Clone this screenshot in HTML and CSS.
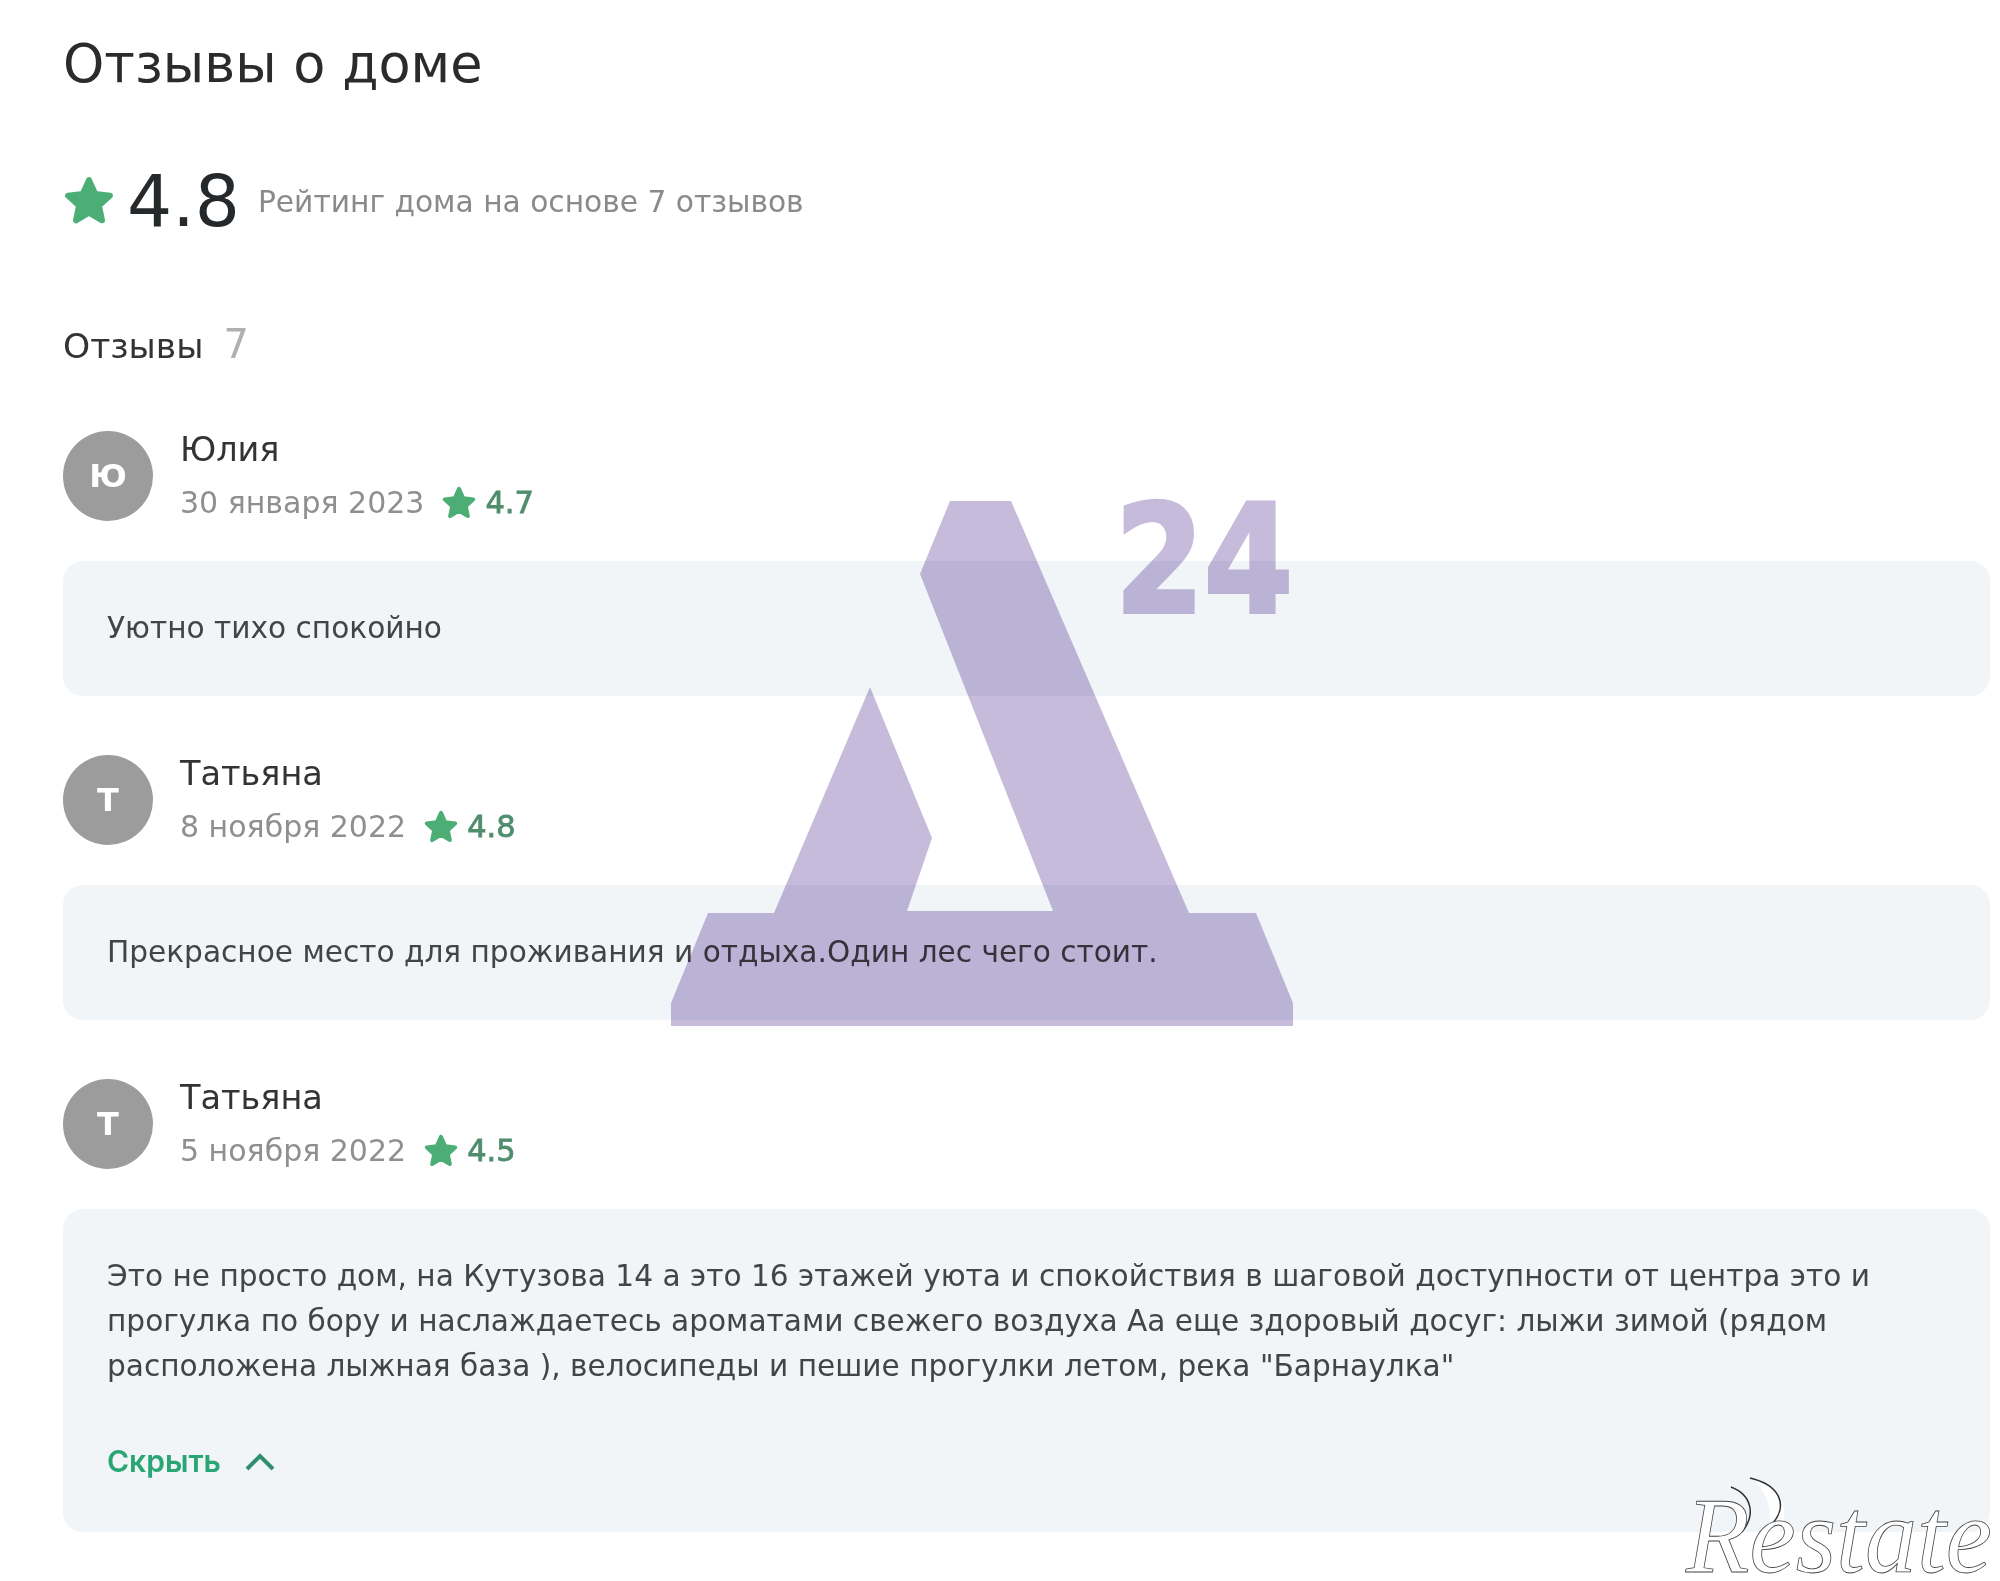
FILE: index.html
```html
<!DOCTYPE html>
<html>
<head>
    <meta charset="utf-8">
    <link rel="stylesheet" href="styles.css">
</head>
<body>
    <div class="page">
        <h1 class="title">Отзывы о доме</h1>

        <div class="summary">
            <svg class="star star-big" viewBox="0 0 24 24"><path d="M12 3l2.700 6 6.300.7-4.700 4.300 1.300 6.300L12 17l-5.600 3.300L7.700 14 3 9.700 9.300 9z"/></svg>
            <span class="summary-num">4.8</span>
            <span class="summary-text">Рейтинг дома на основе 7 отзывов</span>
        </div>

        <div class="count"><span class="count-label">Отзывы</span><span class="count-num">7</span></div>

        <!-- Review 1 -->
        <div class="review">
            <div class="head">
                <div class="avatar">Ю</div>
                <div class="who">
                    <div class="name">Юлия</div>
                    <div class="meta">
                        <span class="date">30 января 2023</span>
                        <svg class="star star-small" viewBox="0 0 24 24"><path d="M12 3l2.700 6 6.300.7-4.700 4.300 1.300 6.300L12 17l-5.600 3.300L7.700 14 3 9.700 9.300 9z"/></svg>
                        <span class="mark">4.7</span>
                    </div>
                </div>
            </div>
            <div class="panel">Уютно тихо спокойно</div>
        </div>

        <!-- Review 2 -->
        <div class="review">
            <div class="head">
                <div class="avatar">Т</div>
                <div class="who">
                    <div class="name">Татьяна</div>
                    <div class="meta">
                        <span class="date">8 ноября 2022</span>
                        <svg class="star star-small" viewBox="0 0 24 24"><path d="M12 3l2.700 6 6.300.7-4.700 4.300 1.300 6.300L12 17l-5.600 3.300L7.700 14 3 9.700 9.300 9z"/></svg>
                        <span class="mark">4.8</span>
                    </div>
                </div>
            </div>
            <div class="panel">Прекрасное место для проживания и отдыха.Один лес чего стоит.</div>
        </div>

        <!-- Review 3 -->
        <div class="review">
            <div class="head">
                <div class="avatar">Т</div>
                <div class="who">
                    <div class="name">Татьяна</div>
                    <div class="meta">
                        <span class="date">5 ноября 2022</span>
                        <svg class="star star-small" viewBox="0 0 24 24"><path d="M12 3l2.700 6 6.300.7-4.700 4.300 1.300 6.300L12 17l-5.600 3.300L7.700 14 3 9.700 9.300 9z"/></svg>
                        <span class="mark">4.5</span>
                    </div>
                </div>
            </div>
            <div class="panel panel-long">
                <p class="long">Это не просто дом, на Кутузова 14 а это 16 этажей уюта и спокойствия в шаговой доступности от центра это и<br>прогулка по бору и наслаждаетесь ароматами свежего воздуха Аа еще здоровый досуг: лыжи зимой (рядом<br>расположена лыжная база ), велосипеды и пешие прогулки летом, река "Барнаулка"</p>
                <div class="hide">Скрыть
                    <svg class="chevron" viewBox="0 0 30 18"><path d="M2 16L15 3l13 13"/></svg>
                </div>
            </div>
        </div>
    </div>

    <!-- Watermarks over the page -->
    <svg class="watermark" viewBox="0 0 2000 1581">
        <g class="mark-d">
            <path d="M950 501H1011L1189 913H1256L1293 1003V1026H671V1003L708 913H774L870 687L932 838L907 911H1053L920 574Z"/>
            <text class="mark-24" x="1115" y="612" textLength="178" lengthAdjust="spacingAndGlyphs">24</text>
        </g>
    </svg>
    <svg class="watermark" viewBox="0 0 2000 1581">
        <path class="restate-glow" d="M1752 1478C1790 1490 1795 1525 1765 1545C1775 1515 1770 1495 1752 1478Z"/>
        <path class="restate-arc" d="M1731 1487C1752 1495 1756 1515 1742 1532"/>
        <path class="restate-arc" d="M1750 1478C1780 1485 1788 1505 1773 1523"/>
        <text class="restate" x="1686" y="1572" textLength="306" lengthAdjust="spacingAndGlyphs">Restate</text>
    </svg>
</body>
</html>
```

FILE: styles.css
```css
body {
    margin: 0;
    background: #fff;
    color: #333;
    font-family: "DejaVu Sans", sans-serif;
    overflow: hidden;
}
.page {
    width: 1927px;
    margin-left: 63px;
    padding-top: 34px;
}
.title {
    margin: 0;
    font-size: 52.500px;
    line-height: 60px;
    font-weight: 400;
    color: #2b2b2b;
}

/* Rating */
.summary {
    display: flex;
    align-items: center;
    margin-top: 65px;
    height: 84px;
}
.star {
    fill: #4cae74;
    stroke: #4cae74;
    stroke-width: 2.500;
    stroke-linejoin: round;
    flex: none;
}
.star-big {
    width: 56px;
    height: 56px;
    margin-left: -2px;
    margin-right: 10px;
}
.summary-num {
    font-size: 71px;
    color: #26292c;
    margin-right: 18px;
}
.summary-text {
    font-size: 29.700px;
    color: #8a8a8a;
}

.count {
    display: flex;
    align-items: baseline;
    margin-top: 78px;
    margin-bottom: 60px;
    height: 50px;
}
.count-label {
    font-size: 34.500px;
    color: #333;
}
.count-num {
    font-size: 40px;
    color: #b0b0b0;
    margin-left: 20px;
}

/* Review */
.review {
    margin-bottom: 59px;
}
.review:last-child {
    margin-bottom: 0;
}
.head {
    display: flex;
    align-items: center;
    height: 90px;
}
.avatar {
    width: 90px;
    height: 90px;
    border-radius: 50%;
    background: #9c9c9c;
    color: #fff;
    font-size: 32px;
    font-weight: 700;
    display: flex;
    align-items: center;
    justify-content: center;
    margin-right: 27px;
}
.who {
    display: flex;
    flex-direction: column;
    gap: 15px;
}
.name {
    font-size: 33.500px;
    line-height: 38px;
    color: #333;
}
.meta {
    display: flex;
    align-items: center;
    font-size: 30px;
    line-height: 38px;
    color: #8f8f8f;
}
.star-small {
    width: 38px;
    height: 38px;
    margin: 0 7px 0 16px;
}
.mark {
    color: #4f8d6d;
    font-size: 30.500px;
    -webkit-text-stroke: 0.8px #4f8d6d;
}
.panel {
    margin-top: 40px;
    padding: 45px 44px;
    background: #f1f5f8;
    border-radius: 20px;
    font-size: 29.600px;
    line-height: 45px;
    color: #444;
}
.panel-long {
    padding-bottom: 48px;
}
.long {
    margin: 0;
}
.hide {
    display: flex;
    align-items: center;
    margin-top: 50px;
    font-family: "Inter", sans-serif;
    font-size: 30px;
    line-height: 45px;
    font-weight: 600;
    color: #2aa574;
}
.chevron {
    width: 30px;
    height: 18px;
    margin-left: 24px;
    fill: none;
    stroke: #2f8f6c;
    stroke-width: 4;
}

/* Watermarks */
.watermark {
    position: absolute;
    left: 0;
    top: 0;
    width: 2000px;
    height: 1581px;
    pointer-events: none;
}
.mark-d {
    fill: #c6bbdb;
    mix-blend-mode: multiply;
}
.mark-24 {
    font-family: "DejaVu Sans", sans-serif;
    font-weight: 700;
    font-size: 150px;
    stroke: #c6bbdb;
    stroke-width: 4px;
}
.restate {
    font-family: "Liberation Serif", serif;
    font-style: italic;
    font-size: 108px;
    fill: #fff;
    stroke: #444;
    stroke-width: 0.800px;
}
.restate-arc {
    fill: none;
    stroke: #333;
    stroke-width: 1.500;
}
.restate-glow {
    fill: #fff;
}
```
